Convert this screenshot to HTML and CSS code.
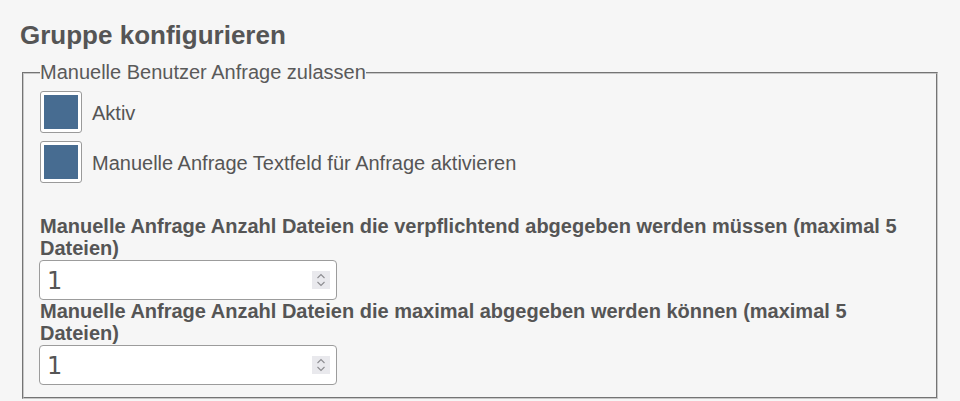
FILE: index.html
```html
<!DOCTYPE html>
<html lang="de">
<head>
<meta charset="utf-8">
<title>Gruppe konfigurieren</title>
<link rel="stylesheet" href="styles.css">
</head>
<body>
<div class="page">
  <h1 class="title">Gruppe konfigurieren</h1>
  <fieldset class="group">
    <legend class="group-legend">Manuelle Benutzer Anfrage zulassen</legend>
    <div class="checks">
      <label class="check-row">
        <span class="checkbox"><span class="checkbox-fill"></span></span>
        <span class="check-label">Aktiv</span>
      </label>
      <label class="check-row">
        <span class="checkbox"><span class="checkbox-fill"></span></span>
        <span class="check-label">Manuelle Anfrage Textfeld für Anfrage aktivieren</span>
      </label>
    </div>
    <div class="fields">
      <div class="field">
        <div class="field-label">Manuelle Anfrage Anzahl Dateien die verpflichtend abgegeben werden müssen (maximal 5 Dateien)</div>
        <div class="numbox">
          <span class="numbox-value">1</span>
          <span class="spinner">
            <svg width="12" height="16" viewBox="0 0 12 16" fill="none" stroke="#8c8c90" stroke-width="1.1"><path d="M2.5 6 L6 2.5 L9.5 6"/><path d="M2.5 10 L6 13.5 L9.5 10"/></svg>
          </span>
        </div>
      </div>
      <div class="field">
        <div class="field-label">Manuelle Anfrage Anzahl Dateien die maximal abgegeben werden können (maximal 5 Dateien)</div>
        <div class="numbox">
          <span class="numbox-value">1</span>
          <span class="spinner">
            <svg width="12" height="16" viewBox="0 0 12 16" fill="none" stroke="#8c8c90" stroke-width="1.1"><path d="M2.5 6 L6 2.5 L9.5 6"/><path d="M2.5 10 L6 13.5 L9.5 10"/></svg>
          </span>
        </div>
      </div>
    </div>
  </fieldset>
</div>
</body>
</html>
```

FILE: styles.css
```css
html, body {
  margin: 0;
  padding: 0;
  background: #f6f6f6;
}

body {
  font-family: "Liberation Sans", Arial, sans-serif;
  color: #555555;
  overflow: hidden;
}

.page {
  padding: 20px 20px 0 20px;
}

.title {
  margin: 0 0 11px 0;
  font-size: 26px;
  line-height: 30px;
  font-weight: bold;
  color: #555555;
}

.group {
  margin: 0 2px;
  padding: 7px 16px 12px 16px;
  border: 2px groove #c8c8c8;
  font-size: 20px;
}

.group-legend {
  padding: 0;
  font-size: 20px;
  line-height: 23px;
  color: #5a5a5a;
}

.checks {
  display: flex;
  flex-direction: column;
  gap: 8px;
}

.check-row {
  display: flex;
  align-items: center;
  gap: 10px;
}

.checkbox {
  display: block;
  width: 34px;
  height: 34px;
  padding: 3px;
  border: 1px solid #9a9a9a;
  border-radius: 3px;
  background: #ffffff;
}

.checkbox-fill {
  display: block;
  width: 100%;
  height: 100%;
  background: #476c91;
}

.check-label {
  font-size: 20px;
  line-height: 23px;
  padding-top: 2px;
  color: #555555;
}

.fields {
  margin-top: 32px;
  display: flex;
  flex-direction: column;
}

.field-label {
  font-size: 20px;
  line-height: 22px;
  font-weight: bold;
  color: #555555;
}

.field-label + .numbox {
  margin-top: 1px;
}

.numbox {
  box-sizing: border-box;
  width: 298px;
  height: 40px;
  margin-left: -1px;
  border: 1px solid #9c9c9c;
  border-radius: 4px;
  background: #ffffff;
  display: flex;
  align-items: center;
  padding: 0 6px 0 7px;
}

.numbox-value {
  flex: 1;
  font-family: "DejaVu Sans", Verdana, sans-serif;
  font-size: 24px;
  line-height: 28px;
  padding-top: 2px;
  color: #555555;
}

.spinner {
  width: 18px;
  height: 18px;
  background: #e9e9ed;
  display: flex;
  align-items: center;
  justify-content: center;
}
```
